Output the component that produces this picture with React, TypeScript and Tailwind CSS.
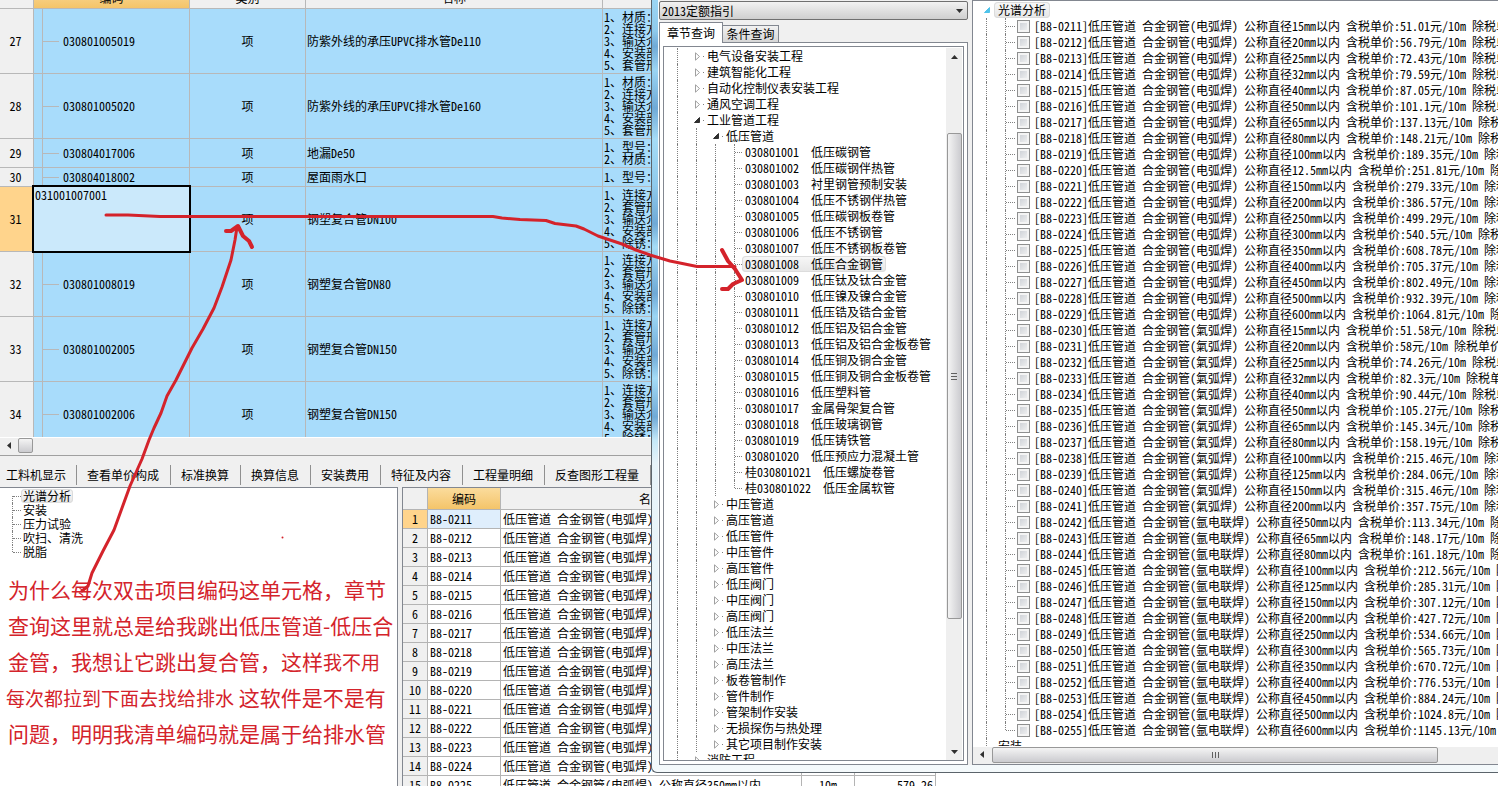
import { clsx } from 'clsx'

interface BillRow {
  no: number
  code: string
  name: string
  features: string[]
  height: string
}

const PIPE_FEATURES = ['1、材质：', '2、连接方式', '3、输送介质', '4、安装部位', '5、套管形式']
const STEEL_FEATURES = ['1、连接方式', '2、套管形式', '3、输送介质', '4、安装部位', '5、除锈：']

const billRows: BillRow[] = [
  { no: 27, code: '030801005019', name: '防紫外线的承压UPVC排水管De110', features: PIPE_FEATURES, height: 'h-16' },
  { no: 28, code: '030801005020', name: '防紫外线的承压UPVC排水管De160', features: PIPE_FEATURES, height: 'h-16' },
  { no: 29, code: '030804017006', name: '地漏De50', features: ['1、型号：', '2、材质：'], height: 'h-7' },
  { no: 30, code: '030804018002', name: '屋面雨水口', features: ['1、型号：'], height: 'h-[18px]' },
  { no: 31, code: '031001007001', name: '钢塑复合管DN100', features: STEEL_FEATURES, height: 'h-16' },
  { no: 32, code: '030801008019', name: '钢塑复合管DN80', features: STEEL_FEATURES, height: 'h-16' },
  { no: 33, code: '030801002005', name: '钢塑复合管DN150', features: STEEL_FEATURES, height: 'h-16' },
  { no: 34, code: '030801002006', name: '钢塑复合管DN150', features: STEEL_FEATURES, height: 'h-16' },
]
const ACTIVE_ROW = 31

const toolTabs = [
  { label: '工料机显示', width: 'w-[77px] pl-[6px]' },
  { label: '查看单价构成', width: 'w-[94px] pl-[10px]' },
  { label: '标准换算', width: 'w-[70px] pl-[10px]' },
  { label: '换算信息', width: 'w-[70px] pl-[10px]' },
  { label: '安装费用', width: 'w-[70px] pl-[10px]' },
  { label: '特征及内容', width: 'w-[82px] pl-[10px]' },
  { label: '工程量明细', width: 'w-[82px] pl-[10px]' },
  { label: '反查图形工程量', width: 'w-[106px] pl-[10px]' },
]

const workTypes = ['光谱分析', '安装', '压力试验', '吹扫、清洗', '脱脂']

// 焊接方式, 起始编号, [公称直径, 含税单价]
const quotaGroups: { weld: string; start: number; items: [string, string][] }[] = [
  {
    weld: '电弧焊',
    start: 211,
    items: [
      ['15', '51.01'], ['20', '56.79'], ['25', '72.43'], ['32', '79.59'], ['40', '87.05'],
      ['50', '101.1'], ['65', '137.13'], ['80', '148.21'], ['100', '189.35'], ['12.5', '251.81'],
      ['150', '279.33'], ['200', '386.57'], ['250', '499.29'], ['300', '540.5'], ['350', '608.78'],
      ['400', '705.37'], ['450', '802.49'], ['500', '932.39'], ['600', '1064.81'],
    ],
  },
  {
    weld: '氣弧焊',
    start: 230,
    items: [
      ['15', '51.58'], ['20', '58'], ['25', '74.26'], ['32', '82.3'], ['40', '90.44'], ['50', '105.27'],
      ['65', '145.34'], ['80', '158.19'], ['100', '215.46'], ['125', '284.06'], ['150', '315.46'],
      ['200', '357.75'],
    ],
  },
  {
    weld: '氩电联焊',
    start: 242,
    items: [
      ['50', '113.34'], ['65', '148.17'], ['80', '161.18'], ['100', '212.56'], ['125', '285.31'],
      ['150', '307.12'], ['200', '427.72'], ['250', '534.66'], ['300', '565.73'], ['350', '670.72'],
      ['400', '776.53'], ['450', '884.24'], ['500', '1024.8'], ['600', '1145.13'],
    ],
  },
]

const quotas = quotaGroups.flatMap(({ weld, start, items }) =>
  items.map(([size, price], i) => ({
    code: `B8-0${start + i}`,
    name: `低压管道 合金钢管(${weld}) 公称直径${size}mm以内`,
    price,
  })),
)

type NodeState = 'closed' | 'open' | 'leaf'
interface TreeNode {
  label: string
  depth: number
  state: NodeState
}

const leafNames = [
  '低压碳钢管', '低压碳钢伴热管', '衬里钢管预制安装', '低压不锈钢伴热管', '低压碳钢板卷管', '低压不锈钢管',
  '低压不锈钢板卷管', '低压合金钢管', '低压钛及钛合金管', '低压镍及镍合金管', '低压锆及锆合金管',
  '低压铝及铝合金管', '低压铝及铝合金板卷管', '低压铜及铜合金管', '低压铜及铜合金板卷管', '低压塑料管',
  '金属骨架复合管', '低压玻璃钢管', '低压铸铁管', '低压预应力混凝土管', '低压螺旋卷管', '低压金属软管',
]

const node = (depth: number, state: NodeState) => (label: string): TreeNode => ({ label, depth, state })

const chapters: TreeNode[] = [
  ...['电气设备安装工程', '建筑智能化工程', '自动化控制仪表安装工程', '通风空调工程'].map(node(1, 'closed')),
  node(1, 'open')('工业管道工程'),
  node(2, 'open')('低压管道'),
  ...leafNames
    .map((name, i) => `${i >= 20 ? '桂' : ''}0308010${String(i + 1).padStart(2, '0')}  ${name}`)
    .map(node(3, 'leaf')),
  ...[
    '中压管道', '高压管道', '低压管件', '中压管件', '高压管件', '低压阀门', '中压阀门', '高压阀门', '低压法兰',
    '中压法兰', '高压法兰', '板卷管制作', '管件制作', '管架制作安装', '无损探伤与热处理', '其它项目制作安装',
  ].map(node(2, 'closed')),
  node(1, 'closed')('消防工程'),
]

const SELECTED_BOX = 'rounded-sm bg-linear-to-b from-[#f8f8f8] to-[#e6e6e6] ring-1 ring-inset ring-[#dcdcdc]'

function Expander({ open, color = '#303030' }: { open: boolean; color?: string }) {
  return (
    <svg width="9" height="9" viewBox="0 0 9 9" aria-hidden="true">
      {open ? (
        <path d="M6.5 1.5v5h-5z" fill={color} stroke={color} />
      ) : (
        <path d="M2.5 .8v7.4L6.5 4.5z" fill="#fff" stroke="#a0a0a0" />
      )}
    </svg>
  )
}

function Triangle({ direction }: { direction: 'up' | 'down' | 'left' }) {
  const d = { up: 'M1 6h7L4.5 2z', down: 'M1 3h7L4.5 7z', left: 'M6 1v7L2 4.5z' }[direction]
  return (
    <svg width="9" height="9" viewBox="0 0 9 9" aria-hidden="true">
      <path d={d} fill="#303030" />
    </svg>
  )
}

function BillTable() {
  const cell = 'border-r border-b border-[#b8b8b8] p-0'
  const head = 'border-r border-b border-[#b8b8b8] p-0 pb-0.5 align-bottom font-normal'
  return (
    <div className="h-[438px] shrink-0 overflow-hidden border-b border-white bg-[#a8dcfb]">
      <table className="-mt-3.5 w-full table-fixed border-separate border-spacing-0">
        <colgroup>
          <col className="w-[34px]" />
          <col className="w-[156px]" />
          <col className="w-[116px]" />
          <col className="w-[297px]" />
          <col />
        </colgroup>
        <thead>
          <tr className="h-[23px] bg-[#f0f0f0] leading-4">
            <th className={head} />
            <th className={clsx(head, 'bg-linear-to-b from-[#fbdc9c] to-[#f4c469]')}>编码</th>
            <th className={head}>类别</th>
            <th className={head}>名称</th>
            <th className={head} />
          </tr>
        </thead>
        <tbody>
          {billRows.map((row) => (
            <tr key={row.no}>
              <td className={clsx(cell, 'pr-0.5 text-center', row.no === ACTIVE_ROW ? 'bg-[#ffd48c]' : 'bg-[#f0f0f0]')}>
                {row.no}
              </td>
              <td className={cell}>
                {row.no === ACTIVE_ROW ? (
                  <textarea
                    aria-label="编码"
                    defaultValue={row.code}
                    className="relative block h-16 w-full resize-none bg-[#cbe9fb] pl-px leading-4 outline-2 outline-black"
                  />
                ) : (
                  <div className={clsx('ml-2 flex items-center border-l border-[#b8b8b8]', row.height)}>
                    <span className="mr-1 w-4 border-t border-[#b8b8b8]" />
                    {row.code}
                  </div>
                )}
              </td>
              <td className={clsx(cell, 'text-center')}>项</td>
              <td className={clsx(cell, 'pl-px')}>{row.name}</td>
              <td className={clsx(cell, 'pl-px')}>
                <div className={clsx('flex flex-col justify-center leading-3', row.height)}>
                  {row.features.map((feature) => (
                    <span key={feature}>{feature}</span>
                  ))}
                </div>
              </td>
            </tr>
          ))}
        </tbody>
      </table>
    </div>
  )
}

function QuotaTable() {
  const cell = 'border-r border-b border-[#b4b4b4] p-0'
  return (
    <div className="min-w-0 flex-1 overflow-hidden border-t border-l border-[#828790] bg-white">
      <table className="w-[533px] table-fixed border-separate border-spacing-0">
        <colgroup>
          <col className="w-[25px]" />
          <col className="w-[73px]" />
          <col className="w-[301px]" />
          <col className="w-[53px]" />
          <col />
        </colgroup>
        <thead>
          <tr className="h-[22px] bg-[#f0f0f0]">
            <th className={cell} />
            <th className={clsx(cell, 'bg-linear-to-b from-[#fbdc9c] to-[#f4c469] font-normal')}>编码</th>
            <th className={clsx(cell, 'font-normal')}>名称</th>
            <th className={clsx(cell, 'font-normal')}>单位</th>
            <th className={clsx(cell, 'font-normal')}>单价</th>
          </tr>
        </thead>
        <tbody>
          {quotas.slice(0, 15).map((quota, i) => (
            <tr key={quota.code} className="h-[19px] leading-4">
              <td className={clsx(cell, 'text-center', i === 0 ? 'bg-[#ffd48c]' : 'bg-[#f0f0f0]')}>{i + 1}</td>
              <td className={clsx(cell, 'pl-0.5', i === 0 && 'bg-[#dfeefc]')}>{quota.code}</td>
              <td className={clsx(cell, 'overflow-hidden pl-0.5')}>{quota.name}</td>
              <td className={clsx(cell, 'text-center')}>10m</td>
              <td className={clsx(cell, 'pr-0.5 text-right')}>{i === 14 && '579.26'}</td>
            </tr>
          ))}
        </tbody>
      </table>
    </div>
  )
}

function WorkPanel() {
  return (
    <div className="w-[398px] shrink-0 overflow-hidden border-t border-r border-[#828790] bg-white pt-px">
      <ul className="leading-[14px]">
        {workTypes.map((name, i) => (
          <li key={name} className="flex h-3.5 items-center pl-3">
            <span
              className={clsx(
                'border-l border-dotted border-[#808080]',
                i === 0 && 'h-[7px] self-end',
                i === workTypes.length - 1 && 'h-[7px] self-start',
                i > 0 && i < workTypes.length - 1 && 'h-full',
              )}
            />
            <span className="w-2 border-t border-dotted border-[#808080]" />
            <span className={clsx('px-0.5', i === 0 && SELECTED_BOX)}>{name}</span>
          </li>
        ))}
      </ul>
      <div className="mt-3 font-['Noto_Sans_CJK_SC',sans-serif] text-[21px] leading-9 text-[#d4232b]">
        <p className="h-9 pl-2">为什么每次双击项目编码这单元格，章节</p>
        <p className="h-9 pl-2">查询这里就总是给我跳出低压管道-低压合</p>
        <p className="h-9 pl-2">
          金管，我想让它跳出复合管，这样<span className="text-[19px]">我不用</span>
        </p>
        <p className="h-9 pl-1.5">
          <span className="text-[19px]">每次都拉到下面去找给排水</span> 这软件是不是有
        </p>
        <p className="h-9 pl-2">问题，明明我清单编码就是属于给排水管</p>
      </div>
    </div>
  )
}

function ChapterTree() {
  return (
    <div className="flex min-h-0 flex-1 border border-[#828790] bg-white pt-px pr-px">
      <ul className="min-w-0 flex-1 overflow-hidden pl-[3px] leading-4">
        {chapters.map(({ label, depth, state }) => (
          <li key={label} className="flex h-4 items-center">
            {Array.from({ length: depth }, (_, i) => (
              <span key={i} className="h-full w-[19px] shrink-0 pl-[10px]">
                <span className="block h-full border-l border-dotted border-[#808080]" />
              </span>
            ))}
            {state === 'leaf' ? (
              <span className="flex h-full w-[18px] shrink-0 items-center pl-[10px]">
                <span
                  className={clsx(
                    'border-l border-dotted border-[#808080]',
                    label.includes('1022') ? 'h-2 self-start' : 'h-full',
                  )}
                />
                <span className="flex-1 border-t border-dotted border-[#808080]" />
              </span>
            ) : (
              <span className="flex w-[18px] shrink-0 items-center justify-between pl-[7px]">
                <Expander open={state === 'open'} />
                <span className="size-px bg-[#808080]" />
              </span>
            )}
            <span className={clsx('px-[3px] whitespace-pre', label.includes('1008') && SELECTED_BOX)}>{label}</span>
          </li>
        ))}
      </ul>
      <div className="flex w-4 shrink-0 flex-col items-center bg-[#efefef]">
        <span className="flex h-[18px] items-center">
          <Triangle direction="up" />
        </span>
        <span className="flex-[67]" />
        <span className="flex w-[15px] flex-[485] flex-col items-center justify-center gap-0.5 rounded-xs border border-[#989898] bg-linear-to-r from-[#f4f4f4] to-[#cbcbcf]">
          <i className="h-px w-1.5 bg-[#606060]" />
          <i className="h-px w-1.5 bg-[#606060]" />
          <i className="h-px w-1.5 bg-[#606060]" />
        </span>
        <span className="flex-[123]" />
        <span className="flex h-[18px] items-center">
          <Triangle direction="down" />
        </span>
      </div>
    </div>
  )
}

function QuotaTree() {
  return (
    <div className="flex min-w-0 flex-1 flex-col border-t border-b border-l border-[#828790] bg-white">
      <div className="min-h-0 flex-1 overflow-hidden border-b border-white pt-px pl-2 leading-4">
        <div className="flex h-4 items-center">
          <span className="flex w-[13px] justify-center">
            <Expander open color="#4fc3ea" />
          </span>
          <span className={clsx('px-1', SELECTED_BOX)}>光谱分析</span>
        </div>
        <ul>
          {quotas.map((quota, i) => (
            <li key={quota.code} className="flex h-4 items-center pl-[5px]">
              <span className="h-full w-[19px] shrink-0 border-l border-dotted border-[#808080]" />
              <span
                className={clsx(
                  'border-l border-dotted border-[#808080]',
                  i === quotas.length - 1 ? 'h-2 self-start' : 'h-full',
                )}
              />
              <span className="mr-0.5 w-[9px] shrink-0 border-t border-dotted border-[#808080]" />
              <label className="flex items-center gap-1 whitespace-pre">
                <input
                  type="checkbox"
                  className="size-[13px] shrink-0 appearance-none border border-[#8e8f8f] bg-linear-to-br from-[#c8ccd2] to-[#f6f6f6] ring-2 ring-[#f4f4f4] ring-inset"
                />
                {`[${quota.code}]${quota.name} 含税单价:${quota.price}元/10m 除税单价:`}
              </label>
            </li>
          ))}
        </ul>
        <div className="flex pl-[5px]">
          <span className="w-3 border-l border-dotted border-[#808080]" />
          安装
        </div>
      </div>
      <div className="flex h-[17px] shrink-0 items-start bg-[#efefef]">
        <span className="flex w-[19px] justify-center pt-[3px]">
          <Triangle direction="left" />
        </span>
        <span className="flex h-4 w-[85%] items-center justify-center gap-0.5 rounded-xs border border-[#989898] bg-linear-to-b from-[#f4f4f4] to-[#cbcbcf]">
          <i className="h-1.5 w-px bg-[#606060]" />
          <i className="h-1.5 w-px bg-[#606060]" />
          <i className="h-1.5 w-px bg-[#606060]" />
        </span>
      </div>
    </div>
  )
}

function GuideWindow() {
  return (
    <section className="absolute top-0 right-0 bottom-[13px] left-[651px] flex rounded-bl-md border-b border-l border-[#5b646b] bg-[linear-gradient(to_bottom,#9bd5f3_0%,#8fcaec_4%,#6fa9d6_6%,#9bd5f3_9%,#6fa9d6_14%,#a5dcf6_18%,#8fcaec_24%,#6fa9d6_29%,#a5dcf6_32%,#6fa9d6_38%,#9bd5f3_41%,#6fa9d6_46%,#a5dcf6_49%,#6fa9d6_54%,#c4e8f8_57%,#e6f3f9_60%,#f4f9fb_100%)] pb-[7px] pl-1.5">
      <div className="flex min-w-0 flex-1 gap-1 border-l border-[#f8fcff] bg-[#f0f0f0]">
        <div className="flex w-[309px] shrink-0 flex-col pt-px">
          <div className="relative mb-0.5 flex">
            <select
              aria-label="定额指引"
              className="h-[19px] flex-1 appearance-none rounded-xs border border-[#707070] bg-linear-to-b from-[#f2f2f2] to-[#cfcfcf] pl-0.5 leading-4"
            >
              <option>2013定额指引</option>
            </select>
            <span className="pointer-events-none absolute top-[5px] right-1">
              <Triangle direction="down" />
            </span>
          </div>
          <div role="tablist" className="flex items-end">
            <button
              role="tab"
              aria-selected="true"
              className="relative -mb-px h-[21px] w-16 border border-b-0 border-[#828790] bg-white"
            >
              章节查询
            </button>
            <button
              role="tab"
              aria-selected="false"
              className="h-[17px] w-14 border border-b-0 border-l-0 border-[#828790] bg-linear-to-b from-[#f2f2f2] to-[#d6d6d6] leading-4"
            >
              条件查询
            </button>
          </div>
          <div className="flex min-h-0 flex-1 flex-col border border-[#828790] bg-white p-[3px]">
            <ChapterTree />
          </div>
        </div>
        <QuotaTree />
      </div>
    </section>
  )
}

function RedMarks() {
  return (
    <svg
      className="pointer-events-none absolute top-0 left-0"
      width="800"
      height="620"
      fill="none"
      stroke="#d4232b"
      strokeWidth="3"
      strokeLinecap="round"
      strokeLinejoin="round"
      aria-hidden="true"
    >
      <path d="M106 215H128L160 216.500H493L502 218L520 219.500L546 220.500L555 223.500L576 226L584 229L598 236L622 244L636 250L650 255L670 261L697 266.500H735" />
      <path d="M722 250L728 261L735 269L742 280L733 284L728 289H722" strokeWidth="4" />
      <path d="M82 591L88 586L92 573L103 551L114 530L118 519L130 486L142 459L149 440L154 428L161 413L167 396L176 380L192 348L203 329L214 308L222 287L231 260L235 240L237 227" />
      <path d="M226 231H231L238 226L243 236L249 241L252 247" strokeWidth="4" />
      <path d="M282.500 537.500v.1" strokeWidth="2" />
    </svg>
  )
}

export default function App() {
  return (
    <main className="relative flex h-screen flex-col overflow-hidden bg-[#f0f0f0] font-['Noto_Sans_Mono_CJK_SC','Noto_Sans_CJK_SC',monospace] text-xs whitespace-nowrap text-black">
      <BillTable />
      <div className="flex h-[18px] shrink-0 items-center border-b border-[#a0a0a0] bg-[#efefef] pb-0.5">
        <span className="flex w-[18px] justify-center">
          <Triangle direction="left" />
        </span>
        <span className="size-[15px] rounded-xs border border-[#989898] bg-linear-to-b from-[#f4f4f4] to-[#cbcbcf]" />
      </div>
      <nav className="flex h-[31px] shrink-0 items-end pb-0.5">
        {toolTabs.map((tab) => (
          <button key={tab.label} className={clsx('h-5 shrink-0 border-r border-[#909090] text-left', tab.width)}>
            {tab.label}
          </button>
        ))}
      </nav>
      <div className="flex min-h-0 flex-1 gap-1">
        <WorkPanel />
        <QuotaTable />
      </div>
      <GuideWindow />
      <RedMarks />
    </main>
  )
}
